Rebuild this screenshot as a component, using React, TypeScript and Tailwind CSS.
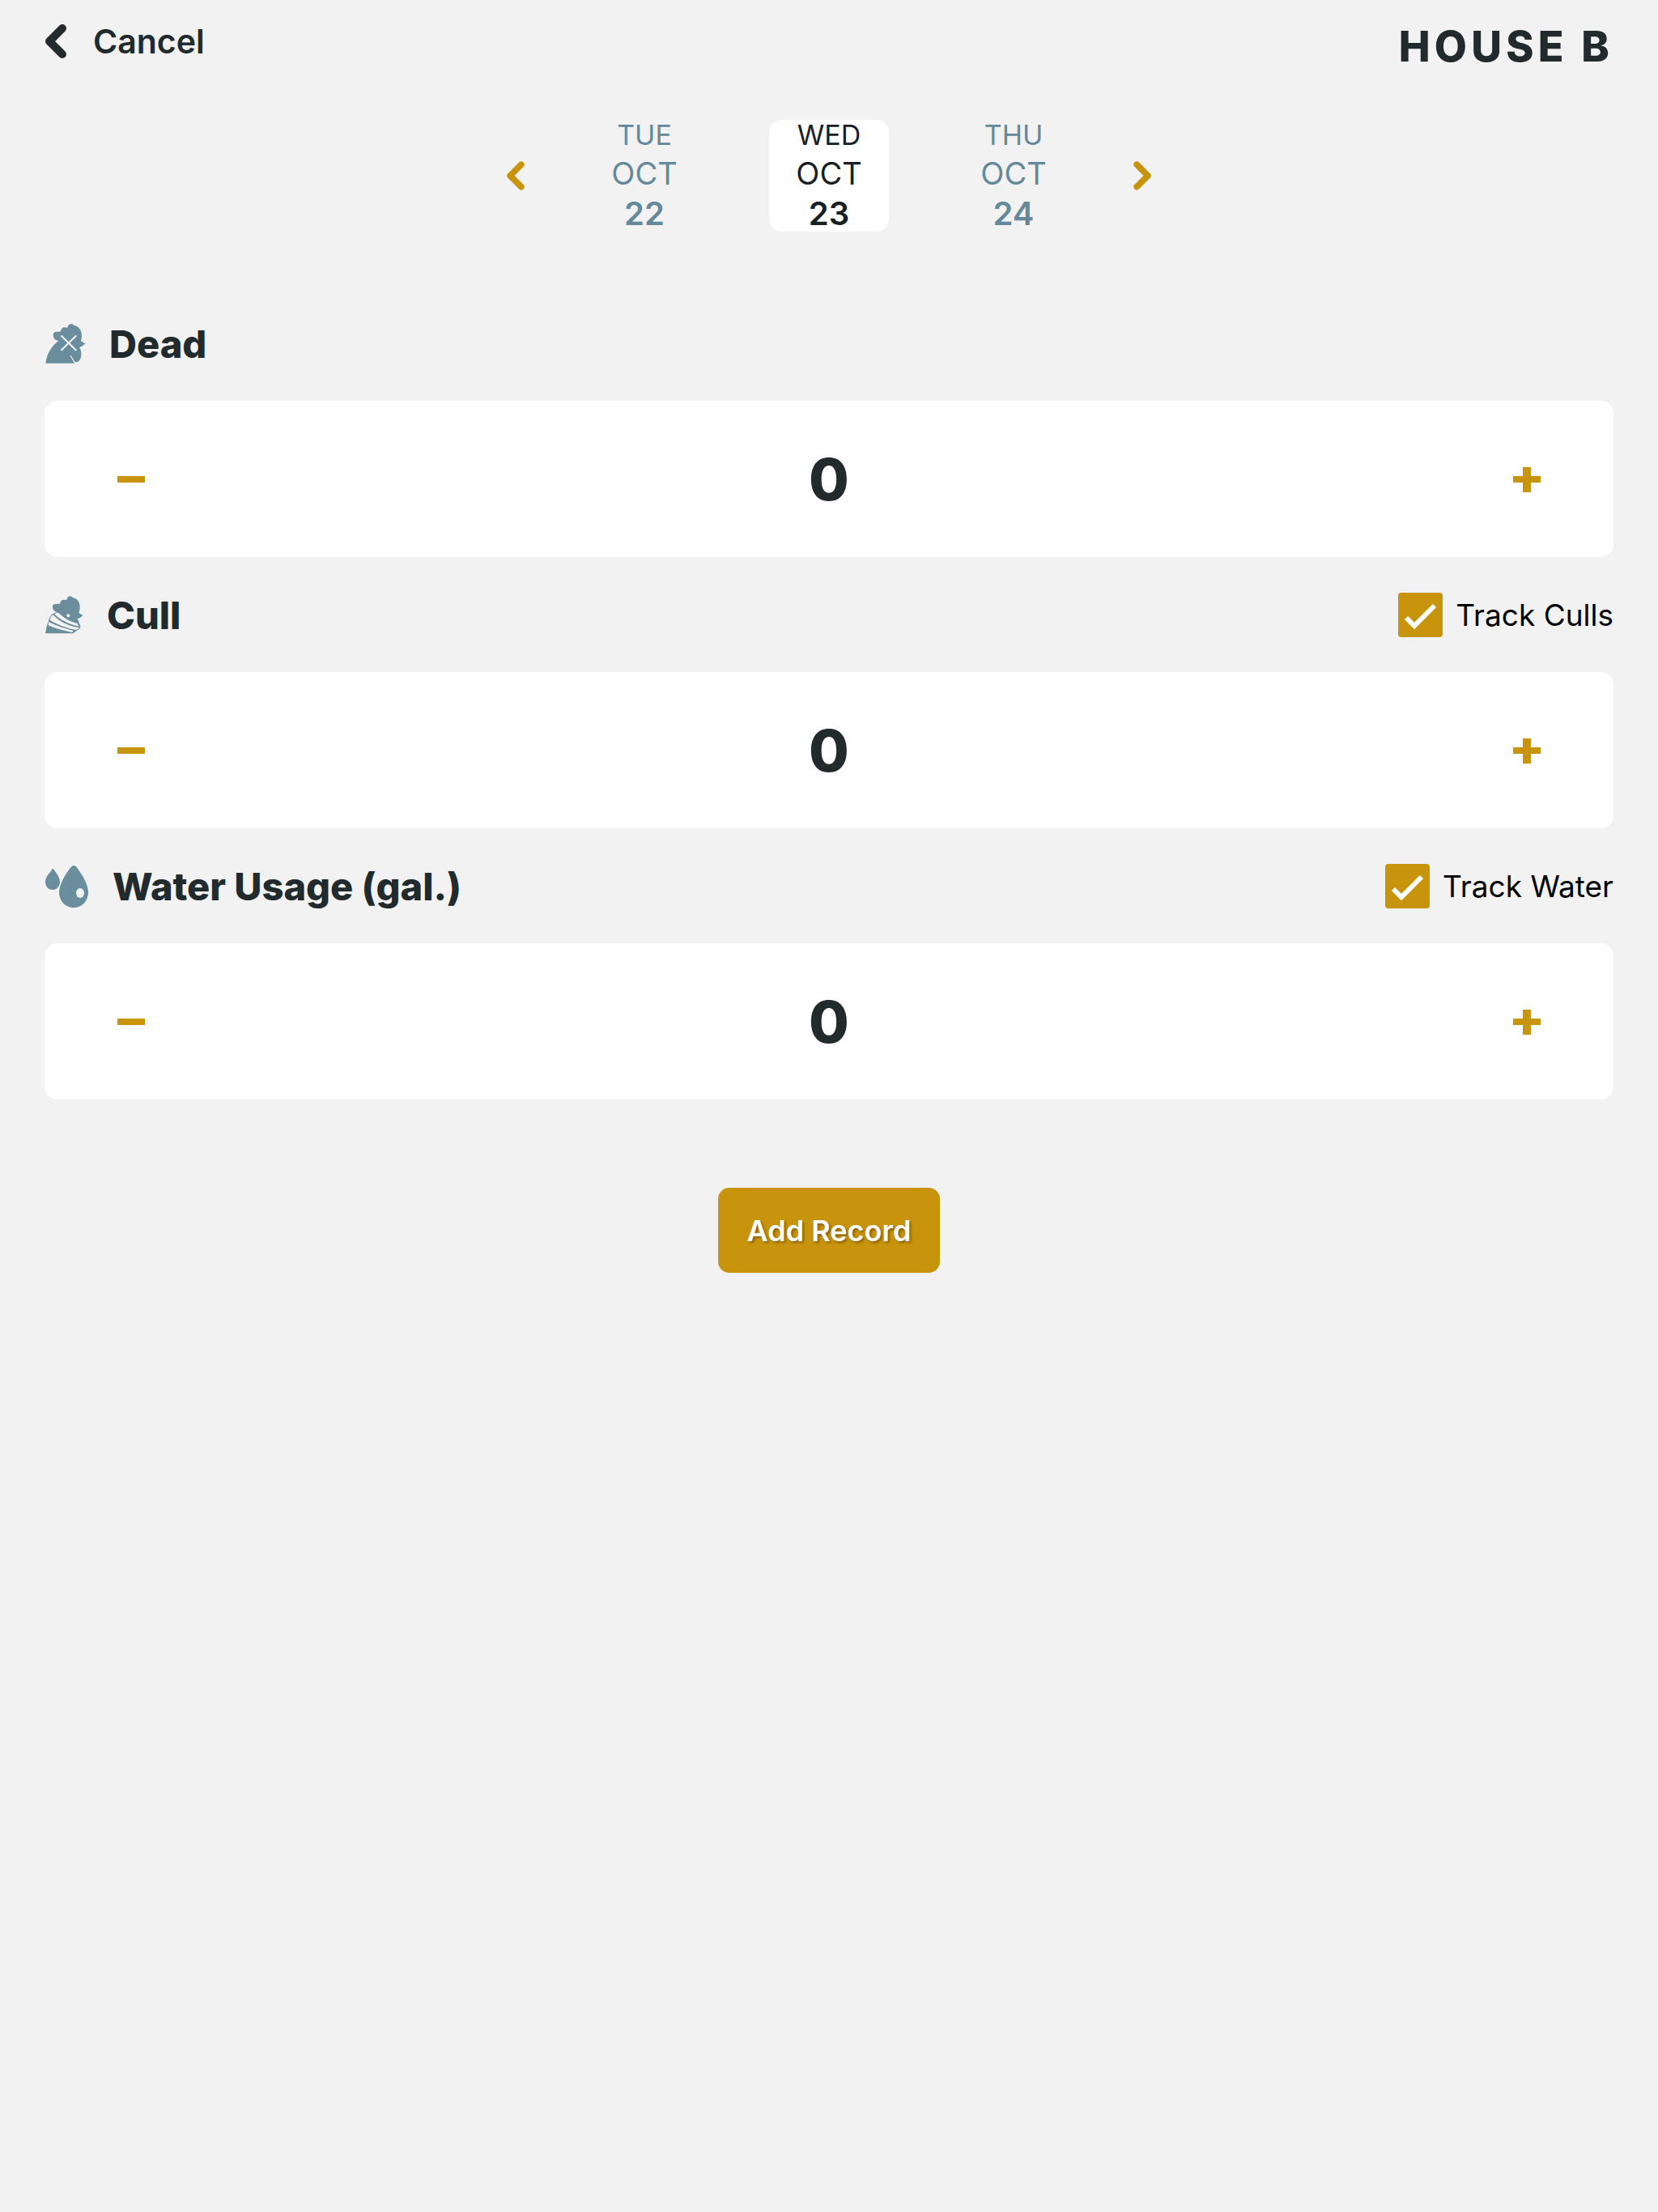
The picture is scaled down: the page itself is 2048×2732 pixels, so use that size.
import { useState } from "react";

const days = [
  { day: "TUE", month: "OCT", date: "22" },
  { day: "WED", month: "OCT", date: "23" },
  { day: "THU", month: "OCT", date: "24" },
];

function Chevron({ flip = false, className }: { flip?: boolean; className: string }) {
  return (
    <svg viewBox="0 0 28 44" className={className} fill="none" stroke="currentColor" strokeLinecap="round" strokeLinejoin="round" aria-hidden="true">
      <path d={flip ? "M6 6 L22 22 L6 38" : "M22 6 L6 22 L22 38"} />
    </svg>
  );
}

function DeadIcon() {
  return (
    <svg viewBox="46 58 150 150" className="size-[50px] overflow-visible text-[#6b8e9f]" aria-hidden="true">
      <path
        fill="currentColor"
        d="M50 207C54 172 72 143 98 123C84 122 78 112 78 102C78 93 84 90 92 90C98 90 102 91 106 89C107 79 112 74 121 74C125 74 128 76 131 75C134 65 138 61 145 61C150 61 153 63 156 67C172 69 184 84 184 104C184 112 182 119 181 125L197 134C190 141 183 146 175 149C180 155 182 163 182 174C182 191 174 202 162 203L158 201L144 178L140 177L157 207Z"
      />
      <path d="M109 106L162 158M162 106L109 158" stroke="#f2f2f2" strokeWidth="6" strokeLinecap="round" />
    </svg>
  );
}

function CullIcon() {
  return (
    <svg viewBox="46 77 141 141" className="size-[47px] overflow-visible text-[#6b8e9f]" aria-hidden="true">
      <path
        fill="currentColor"
        d="M49 216C52 198 55 184 60 174C62 158 70 146 82 141L91 136C81 134 76 126 76 118C76 108 82 107 92 107C98 107 102 107 104 105C105 95 110 91 118 91C122 91 125 93 128 92C130 83 134 78 140 78C145 78 149 81 151 84C167 86 177 99 177 119C177 127 175 134 173 140L188 149C182 156 175 160 167 162C171 167 174 172 174 177L179 188L177 198L165 206L152 216Z"
      />
      <circle cx="134" cy="150" r="6" fill="#f2f2f2" />
      <g fill="#f2f2f2">
        <path d="M84 145C88 139 95 138 99 141C121 162 143 173 168 179L173 190C139 182 106 168 84 145Z" />
        <path d="M66 166C67 154 73 148 80 148C101 172 130 187 174 195L173 198L162 203C126 195 93 184 66 166Z" />
        <path d="M61 173C90 188 122 198 153 206L149 212C117 205 87 198 60 186Z" />
      </g>
    </svg>
  );
}

function WaterIcon() {
  return (
    <svg viewBox="-1 -1 54 53" className="h-[53px] w-[54px] overflow-visible text-[#6b8e9f]" aria-hidden="true">
      <path fill="currentColor" d="M9 4C10 4 11 5 12 7C15 11 18 16 18 20C18 26 14 30 9 30C4 30 0 26 0 20C0 16 3 11 7 7C8 5 8 4 9 4Z" />
      <path fill="currentColor" d="M35 0C37 0 39 2 40 4C46 12 53 24 53 33C53 44 45 52 35 52C25 52 17 44 17 33C17 24 24 12 30 4C32 2 33 0 35 0Z" />
      <ellipse cx="43" cy="34" rx="5" ry="6" fill="#f2f2f2" />
    </svg>
  );
}

function TrackBox({ label }: { label: string }) {
  const [on, setOn] = useState(true);
  return (
    <label className="flex items-center gap-4 text-[37px] leading-none text-black">
      <span className="relative flex size-[55px]">
        <input
          type="checkbox"
          checked={on}
          onChange={() => setOn(!on)}
          className="size-full appearance-none rounded border-2 border-[#c8940c] checked:bg-[#c8940c]"
        />
        {on && (
          <svg viewBox="0 0 55 55" className="pointer-events-none absolute inset-0 size-full" fill="none" stroke="white" strokeWidth="6" aria-hidden="true">
            <path d="M10 31L20 41L45 16" />
          </svg>
        )}
      </span>
      {label}
    </label>
  );
}

function Counter({ title, icon, track }: { title: string; icon: React.ReactNode; track?: string }) {
  const [n, setN] = useState(0);
  return (
    <section className="mb-[43px]">
      <div className="mb-[43px] flex h-14 items-center justify-between">
        <div className="flex items-center gap-[30px]">
          {icon}
          <h2 className="text-[47px] leading-none font-extrabold">{title}</h2>
        </div>
        {track && <TrackBox label={track} />}
      </div>
      <div className="flex h-[193px] items-center justify-between rounded-2xl bg-white px-[82px]">
        <button type="button" aria-label={`Decrease ${title}`} onClick={() => setN(Math.max(0, n - 1))} className="p-2 text-[#c8940c]">
          <svg viewBox="0 0 34 34" className="size-[34px]" fill="currentColor" aria-hidden="true">
            <path d="M0 13H34V21H0Z" />
          </svg>
        </button>
        <output aria-label={title} className="text-[72px] leading-none font-extrabold">{n}</output>
        <button type="button" aria-label={`Increase ${title}`} onClick={() => setN(n + 1)} className="p-2 text-[#c8940c]">
          <svg viewBox="0 0 34 34" className="size-[34px]" fill="currentColor" aria-hidden="true">
            <path d="M12 2H22V13H34V21H22V33H12V21H0V13H12Z" />
          </svg>
        </button>
      </div>
    </section>
  );
}

export default function App() {
  const [selected, setSelected] = useState(1);
  return (
    <main className="min-h-screen bg-[#f2f2f2] px-[55px] pt-6 font-['Inter',sans-serif] text-[#212a2d]">
      <header className="flex items-start justify-between">
        <button type="button" className="flex items-center gap-8 text-[41px] leading-[54px] font-semibold">
          <Chevron className="h-[44px] w-[28px] stroke-[10]" />
          Cancel
        </button>
        <h1 className="pt-1 text-[52px] leading-[60px] font-extrabold tracking-widest">HOUSE B</h1>
      </header>

      <nav aria-label="Date" className="mt-[60px] flex items-center justify-center gap-[73px]">
        <button type="button" aria-label="Previous day" onClick={() => setSelected(Math.max(0, selected - 1))} className="text-[#c8940c]">
          <Chevron className="h-[38px] w-[24px] stroke-[9]" />
        </button>
        <div className="flex gap-20">
          {days.map((d, i) => (
            <button
              type="button"
              key={d.date}
              aria-pressed={i === selected}
              onClick={() => setSelected(i)}
              className={`flex h-[138px] w-[148px] flex-col items-center justify-center rounded-2xl ${i === selected ? "bg-white text-[#182023]" : "text-[#64899a]"}`}
            >
              <span className="text-[34px] leading-[44px]">{d.day}</span>
              <span className="text-[38px] leading-[50px]">{d.month}</span>
              <span className="text-[40px] leading-[50px] font-semibold">{d.date}</span>
            </button>
          ))}
        </div>
        <button type="button" aria-label="Next day" onClick={() => setSelected(Math.min(2, selected + 1))} className="text-[#c8940c]">
          <Chevron flip className="h-[38px] w-[24px] stroke-[9]" />
        </button>
      </nav>

      <div className="mt-[110px]">
        <Counter title="Dead" icon={<DeadIcon />} />
        <Counter title="Cull" icon={<CullIcon />} track="Track Culls" />
        <Counter title="Water Usage (gal.)" icon={<WaterIcon />} track="Track Water" />
      </div>

      <div className="mt-[109px] flex justify-center">
        <button type="button" className="h-[105px] rounded-[14px] bg-[#c8940c] px-9 text-[36px] leading-none font-semibold text-white [text-shadow:2px_2px_3px_rgba(0,0,0,0.35)]">
          Add Record
        </button>
      </div>
    </main>
  );
}
